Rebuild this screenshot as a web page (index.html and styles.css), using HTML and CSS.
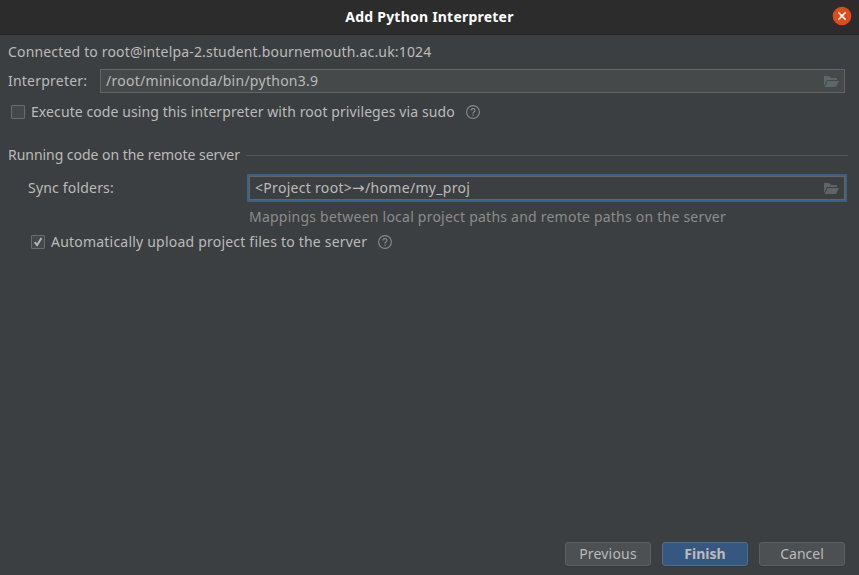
FILE: index.html
```html
<!DOCTYPE html>
<html lang="en">
<head>
<meta charset="utf-8">
<title>Add Python Interpreter</title>
<link rel="stylesheet" href="styles.css">
</head>
<body>
<div class="dialog">
  <header class="titlebar">
    <h1 class="title"><span class="t-title">Add Python Interpreter</span></h1>
    <svg class="close" width="20" height="20" viewBox="0 0 20 20"><circle cx="10" cy="10" r="9.3" fill="#e24a17"/><path d="M6.4 6.4l7.2 7.2M13.6 6.4l-7.2 7.2" stroke="#fff" stroke-width="1.5"/></svg>
  </header>
  <main class="content">
    <div class="connected"><span class="t-conn">Connected to root@intelpa-2.student.bournemouth.ac.uk:1024</span></div>
    <div class="interpreter">
      <label class="interp-label"><span class="t-interp">Interpreter:</span></label>
      <div class="field filled"><span class="t-path">/root/miniconda/bin/python3.9</span>
        <svg class="folder" width="16" height="12" viewBox="0 0 16 12"><path d="M0 10V0h5l2 2h6v2H3L0 10zM3.6 5H15l-3 6H.7z" fill="#5d676b"/></svg>
      </div>
    </div>
    <div class="check-row">
      <span class="checkbox"></span>
      <span class="t-exec">Execute code using this interpreter with root privileges via sudo</span>
      <svg class="help" width="14" height="14" viewBox="0 0 14 14"><circle cx="7" cy="7" r="6.4"/><path d="M5 5.6C5 4.3 5.8 3.6 7 3.6s2 .7 2 1.8C9 6.7 7 6.8 7 8.5M7 9.3v1.4"/></svg>
    </div>
    <div class="section"><span class="t-section">Running code on the remote server</span><span class="rule"></span></div>
    <div class="sync">
      <label class="sync-label"><span class="t-sync">Sync folders:</span></label>
      <div class="focus"><div class="field"><span class="t-map">&lt;Project root&gt;<span class="arrow">→</span>/home/my_proj</span>
        <svg class="folder" width="16" height="12" viewBox="0 0 16 12"><path d="M0 10V0h5l2 2h6v2H3L0 10zM3.6 5H15l-3 6H.7z" fill="#5d6567"/></svg>
      </div></div>
    </div>
    <div class="hint"><span class="t-hint">Mappings between local project paths and remote paths on the server</span></div>
    <div class="check-row upload">
      <span class="checkbox"><svg width="12" height="12" viewBox="0 0 12 12"><path d="M2.7 6.2l2.4 2.9 4.4-7" fill="none" stroke="#b4b7b8" stroke-width="1.9"/></svg></span>
      <span class="t-auto">Automatically upload project files to the server</span>
      <svg class="help" width="14" height="14" viewBox="0 0 14 14"><circle cx="7" cy="7" r="6.4"/><path d="M5 5.6C5 4.3 5.8 3.6 7 3.6s2 .7 2 1.8C9 6.7 7 6.8 7 8.5M7 9.3v1.4"/></svg>
    </div>
  </main>
  <footer class="buttons">
    <button class="btn"><span class="t-prev">Previous</span></button>
    <button class="btn primary"><span class="t-fin">Finish</span></button>
    <button class="btn"><span class="t-can">Cancel</span></button>
  </footer>
</div>
</body>
</html>
```
FILE: styles.css
```css
* { box-sizing: border-box; }
body { margin: 0; background: #3c3f41; color: #bbbbbb; font: 14px/20px "Noto Sans", "Open Sans", sans-serif; white-space: nowrap; }
.dialog { display: flex; flex-direction: column; height: 575px; }
.titlebar { display: grid; grid-template-columns: 1fr auto 1fr; height: 35px; background: #2c2c2c; border-bottom: 1px solid #232323; }
.title { grid-column: 2; margin: 0; padding-top: 7px; font-size: 14px; line-height: 20px; font-weight: 700; color: #fff; }
.close { justify-self: end; margin: 6px 7px 0 0; }
.content { flex: 1; }
.connected { padding: 7px 0 0 8px; }
.interpreter { display: flex; align-items: center; margin-top: 7px; padding: 0 14px 0 8px; }
.interp-label { width: 92px; }
.field { flex: 1; display: flex; align-items: center; justify-content: space-between; height: 24px; padding: 0 4px 0 5px; border: 1px solid #646464; }
.filled { background: #45494a; }
.folder { flex: none; margin-top: 1px; }
.check-row { display: flex; align-items: center; height: 20px; margin-top: 9px; padding-left: 11px; }
.checkbox { display: block; width: 14px; height: 14px; margin-right: 6px; border: 1px solid #6b6b6b; border-radius: 1px; background: #43494a; }
.checkbox svg { display: block; }
.help { margin-left: 11px; fill: none; stroke: #868c8f; stroke-width: 1.1; }
.section { display: flex; align-items: center; height: 20px; margin-top: 23px; padding: 0 11px 0 8px; }
.rule { flex: 1; height: 1px; margin-left: 6px; background: #515557; }
.sync { display: flex; align-items: center; margin-top: 9px; padding: 0 12px 0 28px; }
.sync-label { width: 219px; }
.focus { flex: 1; border: 2px solid #3d6185; border-radius: 1px; }
.hint { margin-top: 5px; padding-left: 249px; color: #8c8c8c; }
.upload { margin-top: 5px; padding-left: 31px; }
.buttons { display: flex; justify-content: flex-end; gap: 11px; padding: 0 14px 9px 0; }
.btn { width: 86px; height: 24px; padding: 0; border: 1px solid #5e6060; border-radius: 3px; background: #4c5052; color: #bbbbbb; font: inherit; box-shadow: 0 1px 0 #35383a; }
.btn span { display: block; line-height: 20px; }
.primary { background: #365880; border-color: #4c708c; font-weight: 700; }

/* Tracking per label */
.t-title { letter-spacing: 0.22px; }
.t-conn { letter-spacing: 0.17px; }
.t-interp { letter-spacing: 0.22px; }
.t-path { letter-spacing: 0.27px; }
.t-exec { letter-spacing: 0.09px; }
.t-section { letter-spacing: -0.04px; }
.t-sync { letter-spacing: 0.19px; }
.t-map { letter-spacing: 0.3px; }
.t-hint { letter-spacing: 0.23px; }
.t-auto { letter-spacing: 0.21px; }
.t-prev { letter-spacing: 0.2px; }
.arrow { display: inline-block; width: 13px; font-family: "DejaVu Sans", sans-serif; font-size: 15px; line-height: 16px; letter-spacing: 0; }
```
